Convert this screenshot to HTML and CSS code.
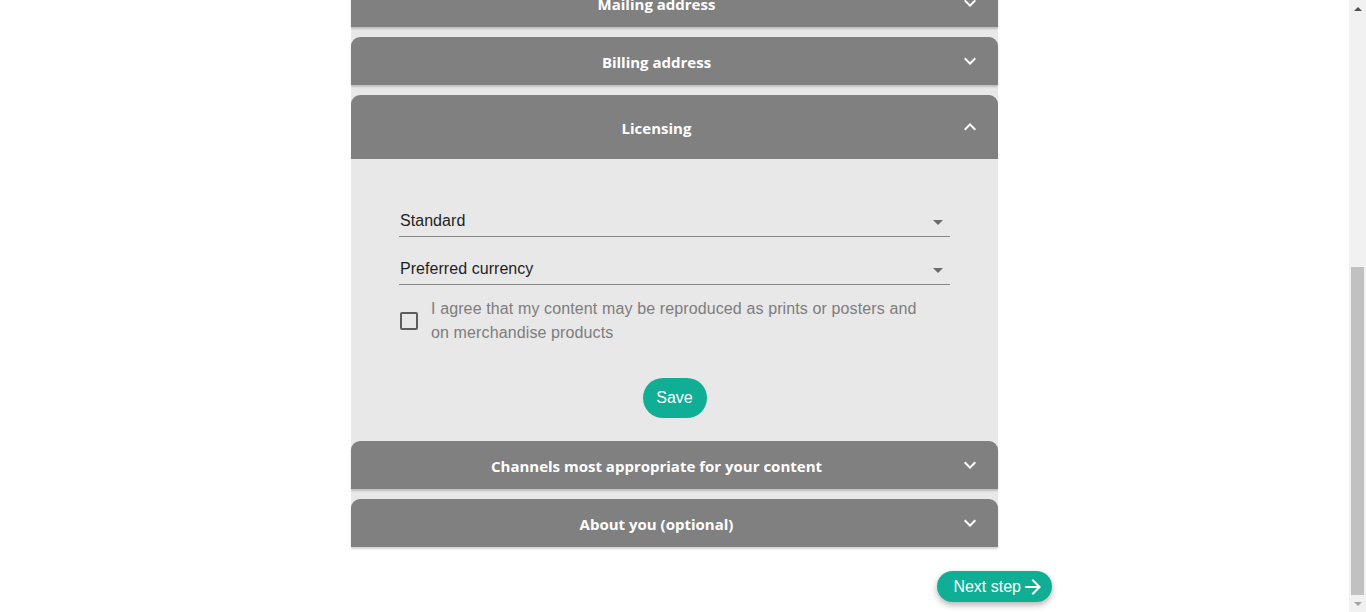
FILE: index.html
```html
<!DOCTYPE html>
<html lang="en">
<head>
<meta charset="utf-8">
<title>Contributor profile</title>
<link rel="stylesheet" href="styles.css">
</head>
<body>
<div class="screen">
  <main class="page">
    <section class="accordion">
      <div class="acc-item">
        <div class="acc-summary"><span class="acc-title">Mailing address</span><svg class="acc-icon" viewBox="0 0 24 24"><path d="M16.59 8.59L12 13.17 7.41 8.59 6 10l6 6 6-6z"/></svg></div>
      </div>
      <div class="acc-item">
        <div class="acc-summary"><span class="acc-title">Billing address</span><svg class="acc-icon" viewBox="0 0 24 24"><path d="M16.59 8.59L12 13.17 7.41 8.59 6 10l6 6 6-6z"/></svg></div>
      </div>
      <div class="acc-item open">
        <div class="acc-summary expanded"><span class="acc-title">Licensing</span><svg class="acc-icon" viewBox="0 0 24 24"><path d="M12 8l-6 6 1.41 1.41L12 10.83l4.59 4.58L18 14z"/></svg></div>
        <div class="acc-details">
          <div class="select-field">
            <span class="select-value">Standard</span>
            <svg class="select-arrow" viewBox="0 0 24 24"><path d="M7 10l5 5 5-5z"/></svg>
          </div>
          <div class="select-field">
            <span class="select-value">Preferred currency</span>
            <svg class="select-arrow" viewBox="0 0 24 24"><path d="M7 10l5 5 5-5z"/></svg>
          </div>
          <label class="check-row">
            <span class="check-box"></span>
            <span class="check-label">I agree that my content may be reproduced as prints or posters and on merchandise products</span>
          </label>
          <div class="save-row">
            <button class="btn-save" type="button">Save</button>
          </div>
        </div>
      </div>
      <div class="acc-item">
        <div class="acc-summary"><span class="acc-title">Channels most appropriate for your content</span><svg class="acc-icon" viewBox="0 0 24 24"><path d="M16.59 8.59L12 13.17 7.41 8.59 6 10l6 6 6-6z"/></svg></div>
      </div>
      <div class="acc-item">
        <div class="acc-summary"><span class="acc-title">About you (optional)</span><svg class="acc-icon" viewBox="0 0 24 24"><path d="M16.59 8.59L12 13.17 7.41 8.59 6 10l6 6 6-6z"/></svg></div>
      </div>
    </section>

    <div class="page-foot">
      <button class="btn-next" type="button">Next step<svg class="next-icon" viewBox="0 0 24 24"><path d="M12 4l-1.41 1.41L16.17 11H4v2h12.17l-5.58 5.59L12 20l8-8z"/></svg></button>
    </div>
  </main>

  <div class="scrollbar" aria-hidden="true">
    <div class="sb-button"><svg class="sb-arrow up" viewBox="0 0 8 4"><path d="M0 4L4 0 8 4z"/></svg></div>
    <div class="sb-track"><div class="sb-thumb"></div></div>
    <div class="sb-button"><svg class="sb-arrow down" viewBox="0 0 8 4"><path d="M0 0L8 0 4 4z"/></svg></div>
  </div>
</div>
</body>
</html>
```

FILE: styles.css
```css
html, body {
  margin: 0;
  height: 100%;
  overflow: hidden;
}

body {
  background: #ffffff;
  font-family: "Liberation Sans", Arial, sans-serif;
  color: #222222;
}

.screen {
  display: flex;
  height: 612px;
}

.page {
  flex: 1;
  height: 612px;
  overflow: hidden;
  display: flex;
  flex-direction: column;
  justify-content: flex-end;
  align-items: center;
  padding-bottom: 10px;
  box-sizing: border-box;
}

/* fake window scrollbar */
.scrollbar {
  width: 17px;
  flex: none;
  display: flex;
  flex-direction: column;
  background: #f1f1f1;
}
.sb-button {
  height: 17px;
  flex: none;
  display: flex;
  align-items: center;
  justify-content: center;
}
.sb-arrow {
  width: 8px;
  height: 4px;
}
.sb-arrow.up {
  fill: #505050;
}
.sb-arrow.down {
  fill: #a3a3a3;
}
.sb-track {
  flex: 1;
  display: flex;
  flex-direction: column;
  justify-content: flex-end;
}
.sb-thumb {
  height: 328px;
  margin: 0 2px;
  background: #c1c1c1;
}

.accordion {
  width: 647px;
  flex: none;
  background: #e8e8e8;
  display: flex;
  flex-direction: column;
}

.acc-item + .acc-item {
  margin-top: 10px;
}
.acc-item.open + .acc-item {
  margin-top: 0;
}

.acc-summary {
  box-sizing: border-box;
  height: 48px;
  display: flex;
  align-items: center;
  padding: 0 16px;
  gap: 12px;
  background: #808080;
  color: #ffffff;
  border-radius: 9px 9px 0 0;
  box-shadow: 0 2px 2px rgba(0, 0, 0, 0.18);
}
.acc-summary.expanded {
  height: 64px;
  box-shadow: none;
}

.acc-title {
  flex: 1;
  text-align: center;
  font-family: "Open Sans", sans-serif;
  font-weight: 700;
  font-size: 15px;
  padding-top: 2px;
}

.acc-icon {
  width: 24px;
  height: 24px;
  fill: #ffffff;
  flex: none;
}

.acc-details {
  background: #e8e8e8;
  padding: 49px 48px 23px;
  display: flex;
  flex-direction: column;
}

.select-field {
  box-sizing: border-box;
  height: 29px;
  display: flex;
  align-items: center;
  border-bottom: 1px solid #878787;
  font-size: 16px;
  color: #1f1f1f;
}
.select-field + .select-field {
  margin-top: 19px;
}
.select-value {
  flex: 1;
  line-height: 19px;
  padding: 0 0 4px 1px;
  letter-spacing: 0.05px;
}
.select-arrow {
  width: 24px;
  height: 24px;
  fill: #6b6b6b;
  flex: none;
}

.check-row {
  margin-top: 12px;
  display: flex;
  align-items: center;
}
.check-box {
  box-sizing: border-box;
  width: 18px;
  height: 18px;
  margin-left: 1px;
  border: 2px solid #5e5e5e;
  border-radius: 2px;
  flex: none;
}
.check-label {
  margin-left: 13px;
  width: 495px;
  font-size: 16px;
  line-height: 24px;
  letter-spacing: 0.12px;
  color: #7d7d7d;
}

.save-row {
  margin-top: 33px;
  display: flex;
  justify-content: center;
}
.btn-save {
  width: 64px;
  height: 40px;
  border: none;
  border-radius: 20px;
  background: #10ae94;
  color: #ffffff;
  font-family: "Liberation Sans", Arial, sans-serif;
  font-size: 16px;
  padding: 0;
}

.page-foot {
  width: 755px;
  flex: none;
  margin-top: 24px;
  display: flex;
  justify-content: flex-end;
}
.btn-next {
  box-sizing: border-box;
  height: 31px;
  display: flex;
  align-items: center;
  padding: 0 7px 0 16px;
  border: none;
  border-radius: 16px;
  background: #10ae94;
  color: #ffffff;
  font-family: "Liberation Sans", Arial, sans-serif;
  font-size: 16px;
  box-shadow: 0 3px 6px rgba(0, 0, 0, 0.3);
}
.next-icon {
  width: 24px;
  height: 24px;
  fill: #ffffff;
}
```
